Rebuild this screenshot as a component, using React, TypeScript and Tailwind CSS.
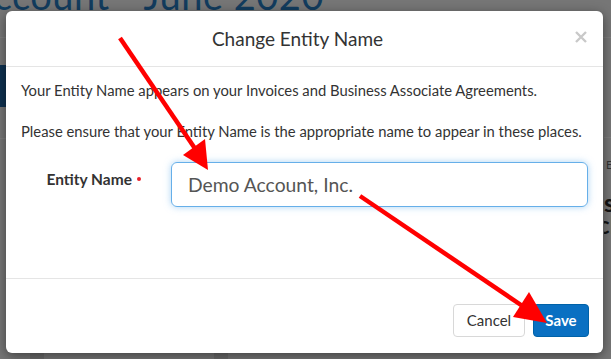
import React from 'react';

const ArrowOverlay: React.FC = () => (
    <svg className="absolute inset-0 pointer-events-none" width="611" height="359" viewBox="0 0 611 359">
        <g stroke="#ff0000" strokeWidth="4.5" strokeLinecap="butt">
            <line x1="120" y1="38" x2="196" y2="150" />
            <line x1="360" y1="196" x2="524" y2="307" />
        </g>
        <g fill="#ff0000">
            <polygon points="208,170 183,155 205,139" />
            <polygon points="547,323 513,317 529,292" />
        </g>
    </svg>
);

const App: React.FC = () => {
    return (
        <div className="relative w-[611px] h-[359px] overflow-hidden bg-[#767676] font-['Lato','Liberation_Sans',sans-serif]">
            {/* Pagina detras del modal */}
            <div className="flex flex-col h-full">
                <div className="h-[38px] border-b border-[#7e7e7e] overflow-visible">
                    <p className="-mt-[26px] -ml-[32px] text-[38px] leading-[42px] text-[#123c5e] whitespace-nowrap tracking-[0.5px]">
                        Account - June 2020
                    </p>
                </div>
                <div className="flex flex-1">
                    <div className="w-[6px] flex flex-col">
                        <div className="h-[27px]" />
                        <div className="h-[42px] bg-[#0f3150]" />
                        <div className="h-[32px] border-b border-[#7e7e7e]" />
                    </div>
                    <div className="flex-1" />
                    <div className="w-[7px] flex flex-col overflow-hidden">
                        <div className="h-[100px] border-b border-[#7e7e7e]" />
                        <p className="mt-[20px] pl-[2px] text-[11px] leading-[14px] text-[#333]">E</p>
                        <p className="mt-[20px] -ml-[6px] text-[24px] leading-[22px] font-bold text-[#141414] whitespace-nowrap">ls</p>
                        <p className="-ml-[6px] text-[24px] leading-[22px] font-bold text-[#141414] whitespace-nowrap">cH</p>
                    </div>
                </div>
                <div className="h-[6px] flex">
                    <div className="w-[30px]" />
                    <div className="w-[14px] bg-[#6a6a6a]" />
                    <div className="w-[170px]" />
                    <div className="w-[14px] bg-[#6a6a6a]" />
                </div>
            </div>

            {/* Modal */}
            <div className="absolute left-[6px] top-[11px] w-[597px] h-[342px] bg-white rounded-[6px] shadow-[0_3px_12px_rgba(0,0,0,0.45)] flex flex-col text-[#333]">
                <div className="h-[56px] flex items-center px-[15px] border-b border-[#e5e5e5]">
                    <h4 className="flex-1 text-center text-[19px] leading-[20px] text-[#333]">Change Entity Name</h4>
                    <button className="w-[14px] h-[14px] flex items-center justify-center -mt-[4px]">
                        <svg width="12" height="12" viewBox="0 0 12 12">
                            <path d="M1 1 L11 11 M11 1 L1 11" stroke="#c9c9c9" strokeWidth="2.4" />
                        </svg>
                    </button>
                </div>

                <div className="flex-1 px-[15px] pt-[13px] border-b border-[#e5e5e5]">
                    <p className="text-[14.8px] leading-[20px] whitespace-nowrap">
                        Your Entity Name appears on your Invoices and Business Associate Agreements.
                    </p>
                    <p className="mt-[21px] text-[14.8px] leading-[20px] whitespace-nowrap">
                        Please ensure that your Entity Name is the appropriate name to appear in these places.
                    </p>
                    <div className="mt-[21px] flex items-start">
                        <label className="w-[120px] pt-[7px] flex items-center justify-end gap-[5px] text-[15.5px] leading-[20px] font-bold text-[#333]">
                            Entity Name
                            <span className="w-[4px] h-[4px] rounded-full bg-[#e8202a]" />
                        </label>
                        <input
                            className="ml-[30px] flex-1 h-[45px] rounded-[6px] border border-[#66afe9] shadow-[0_0_7px_rgba(102,175,233,0.55)] px-[16px] text-[19.3px] text-[#555] outline-none font-['Lato','Liberation_Sans',sans-serif]"
                            defaultValue="Demo Account, Inc."
                        />
                    </div>
                </div>

                <div className="h-[74px] flex items-start justify-end gap-[8px] px-[14px] pt-[25px]">
                    <button className="h-[33px] w-[72px] rounded-[4px] border border-[#d8d8d8] bg-white text-[15px] text-[#333]">
                        Cancel
                    </button>
                    <button className="h-[33px] w-[56px] rounded-[4px] border border-[#0062a8] bg-[#0a70c2] text-[15px] font-bold text-white">
                        Save
                    </button>
                </div>
            </div>

            <ArrowOverlay />
        </div>
    );
};

export default App;
